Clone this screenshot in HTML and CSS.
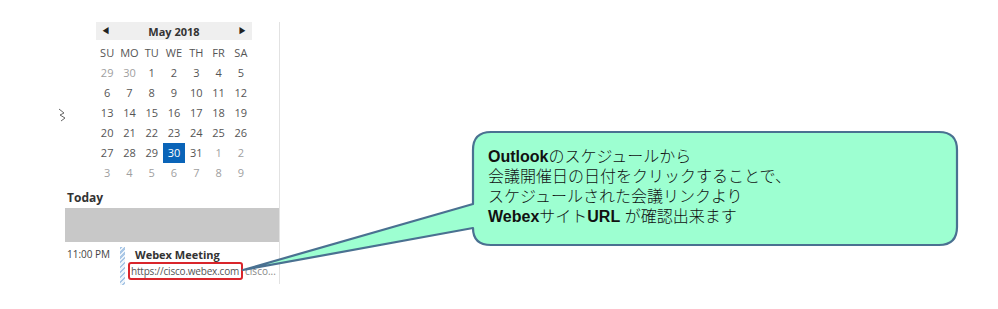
FILE: index.html
```html
<!DOCTYPE html>
<html lang="ja">
<head>
<meta charset="utf-8">
<link rel="stylesheet" href="styles.css">
</head>
<body>
<div class="page">
  <div class="panel">
    <div class="cal">
      <div class="cal-head">
        <span class="arrow">&#9664;</span>
        <span class="title">May 2018</span>
        <span class="arrow">&#9654;</span>
      </div>
      <div class="grid dow">
        <span>SU</span><span>MO</span><span>TU</span><span>WE</span><span>TH</span><span>FR</span><span>SA</span>
      </div>
      <div class="grid days">
        <span class="o">29</span><span class="o">30</span><span>1</span><span>2</span><span>3</span><span>4</span><span>5</span>
        <span>6</span><span>7</span><span>8</span><span>9</span><span>10</span><span>11</span><span>12</span>
        <span>13</span><span>14</span><span>15</span><span>16</span><span>17</span><span>18</span><span>19</span>
        <span>20</span><span>21</span><span>22</span><span>23</span><span>24</span><span>25</span><span>26</span>
        <span>27</span><span>28</span><span>29</span><span class="sel">30</span><span>31</span><span class="o">1</span><span class="o">2</span>
        <span class="o">3</span><span class="o">4</span><span class="o">5</span><span class="o">6</span><span class="o">7</span><span class="o">8</span><span class="o">9</span>
      </div>
    </div>
    <div class="today">Today</div>
    <div class="band"></div>
    <div class="event">
      <div class="time">11:00 PM</div>
      <div class="stripe"></div>
      <div class="info">
        <div class="ev-title">Webex Meeting</div>
        <div class="ev-loc"><span class="url">https://cisco.webex.com</span><span class="more">cisco...</span></div>
      </div>
    </div>
  </div>
</div>

<svg class="squiggle" width="12" height="16" viewBox="0 0 12 16">
  <path d="M3 2 L8 6 L4 8 L9 11 L5 14" fill="none" stroke="#666" stroke-width="1"/>
</svg>

<svg class="callout" width="998" height="309" viewBox="0 0 998 309">
  <path d="M491 132 H939 Q957 132 957 150 V227 Q957 245 939 245 H491 Q473 245 473 228 L243 270 L473 204 V150 Q473 132 491 132 Z"
        fill="#9dffd1" stroke="#4a7191" stroke-width="2.2" stroke-linejoin="round"/>
</svg>
<div class="note">
  <p><b>Outlook</b>のスケジュールから</p>
  <p>会議開催日の日付をクリックすることで、</p>
  <p>スケジュールされた会議リンクより</p>
  <p><b>Webex</b>サイト<b>URL</b> が確認出来ます</p>
</div>
</body>
</html>
```

FILE: styles.css
```css
html, body {
  margin: 0;
  padding: 0;
  background: #fff;
}
body {
  width: 998px;
  height: 309px;
  position: relative;
  overflow: hidden;
  font-family: "Open Sans", "Noto Sans", sans-serif;
}
.page {
  display: flex;
  padding: 22px 0 0 65px;
}
.panel {
  width: 214px;
  height: 262px;
  border-right: 1px solid #e2e2e2;
}
.cal {
  margin-left: 31px;
  width: 156px;
}
.cal-head {
  height: 18px;
  background: #efefef;
  display: flex;
  align-items: center;
  justify-content: space-between;
  padding: 0 5px;
  font-size: 11px;
  color: #333;
}
.cal-head .arrow {
  font-size: 9px;
  color: #222;
}
.cal-head .title {
  font-weight: 700;
}
.grid {
  display: grid;
  grid-template-columns: repeat(7, 1fr);
  font-size: 11px;
  text-align: center;
}
.grid span {
  height: 20px;
  line-height: 20px;
}
.dow {
  margin-top: 3px;
  color: #555;
}
.days {
  color: #555;
}
.days .o {
  color: #a0a0a0;
}
.days .sel {
  background: #0a64b8;
  color: #fff;
}
.today {
  margin-top: 7px;
  height: 16px;
  line-height: 16px;
  padding-left: 2px;
  font-size: 12px;
  font-weight: 700;
  color: #333;
}
.band {
  margin-top: 2px;
  height: 34px;
  background: #c8c8c8;
}
.event {
  display: flex;
  padding-top: 5px;
}
.time {
  width: 53px;
  padding-left: 2px;
  font-size: 10px;
  color: #444;
  line-height: 14px;
}
.stripe {
  width: 5px;
  height: 38px;
  background: repeating-linear-gradient(135deg, #a9c7e6 0 1.5px, #eef4fa 1.5px 3.5px);
}
.info {
  padding-left: 8px;
}
.ev-title {
  font-size: 11px;
  font-weight: 700;
  color: #333;
  line-height: 15px;
  padding-left: 2px;
}
.ev-loc {
  font-size: 10px;
  line-height: 14px;
  color: #555;
  white-space: nowrap;
}
.url {
  display: inline-block;
  border: 2px solid #d9252b;
  border-radius: 3px;
  padding: 0 2px 0 1px;
  margin-left: -5px;
  letter-spacing: -0.2px;
}
.more {
  color: #888;
  margin-left: 2px;
}
.squiggle {
  position: absolute;
  left: 56px;
  top: 107px;
}
.callout {
  position: absolute;
  left: 0;
  top: 0;
  pointer-events: none;
}
.note {
  position: absolute;
  left: 488px;
  top: 147px;
  font-family: "Liberation Sans", "Noto Sans CJK JP", sans-serif;
  font-size: 16px;
  color: #111;
}
.note p {
  margin: 0;
  height: 20px;
  line-height: 20px;
  font-weight: 300;
}
.note b {
  font-weight: 700;
}
```
